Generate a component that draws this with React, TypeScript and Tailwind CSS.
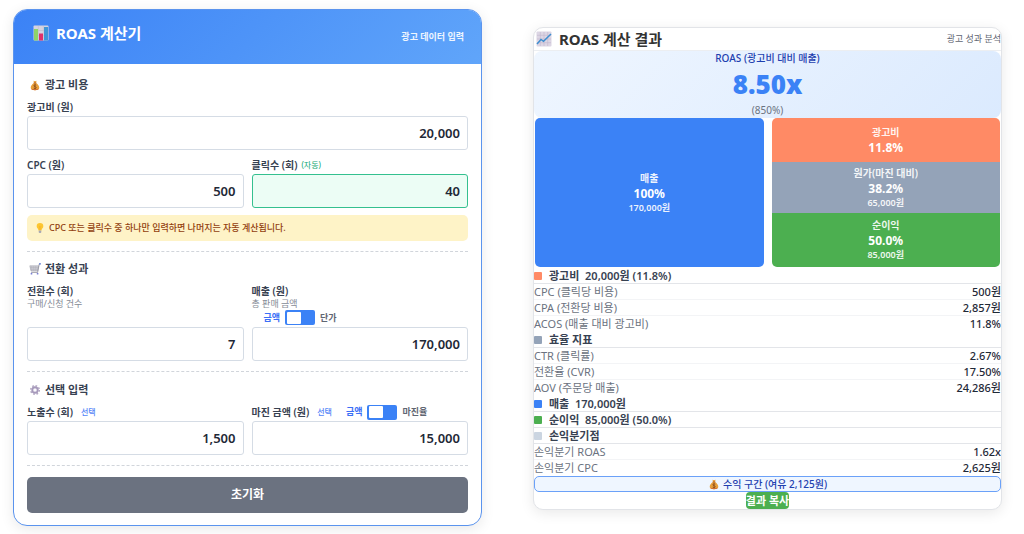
import type { ReactNode } from "react";

const FONT = "font-['Noto_Sans','Noto_Sans_CJK_KR',sans-serif]";

function BarChartIcon() {
  return (
    <svg viewBox="0 0 16 16" className="size-4 shrink-0" aria-hidden="true">
      <rect x="0.5" y="0.5" width="15" height="15" rx="1" fill="#d5d3e0" />
      <path d="M5.3 1v14M10.3 1v14M1 5.5h14M1 10.500h14" stroke="#c0bccf" strokeWidth="0.6" />
      <rect x="1" y="4" width="4" height="11.500" fill="#8fd46a" />
      <rect x="6" y="8.500" width="4" height="7" fill="#e0306c" />
      <rect x="11" y="2" width="4" height="13.500" fill="#3f96d8" />
    </svg>
  );
}

function TrendIcon() {
  return (
    <svg viewBox="0 0 16 16" className="size-4 shrink-0" aria-hidden="true">
      <rect x="0.5" y="0.5" width="15" height="15" rx="1" fill="#dcd6e4" />
      <path d="M4.300 1v14M8 1v14M11.700 1v14M1 4.300h14M1 8h14M1 11.700h14" stroke="#c3b7cf" strokeWidth="0.6" />
      <path d="M1 13l4-4.500 2.500 1.800L15 3" fill="none" stroke="#3f8fd0" strokeWidth="1.500" />
    </svg>
  );
}

function MoneyBagIcon() {
  return (
    <svg viewBox="-1 -1.500 14 14" className="size-3 shrink-0" aria-hidden="true">
      <path d="M4.300.6 6 1.200 7.800.6 7.200 3.200C9.600 4.500 11 6.800 11 8.800 11 10.800 9.500 11.500 6 11.500S1 10.800 1 8.800c0-2 1.400-4.300 3.800-5.600z" fill="#e8a03c" />
      <path d="M1.400 10c1 1.200 2.400 1.500 4.600 1.500s3.600-.3 4.600-1.500c-2 .7-7 .7-9.200 0z" fill="#c9622d" />
      <path d="M4.400 3.200h3.200" stroke="#a7521f" strokeWidth="0.9" />
      <path d="M7.400 5.800C6.500 5 4.700 5.200 4.700 6.400c0 1.300 2.800.8 2.800 2.200 0 1.200-2 1.400-3 .5M6 4.700v5.600" fill="none" stroke="#7a3c17" strokeWidth="0.8" />
    </svg>
  );
}

function CartIcon() {
  return (
    <svg viewBox="0 0 12 12" className="size-3 shrink-0" aria-hidden="true">
      <path d="M.8 2.800h8.700L8.700 8H2z" fill="#d3d3da" stroke="#a2a2ac" strokeWidth="0.6" />
      <path d="M2.800 3v5M4.800 3v5M6.800 3v5M1 4.600h8M1.400 6.300h7.400" stroke="#aaaab4" strokeWidth="0.5" />
      <path d="M11.600.8H10.300L8.600 9.400H2.200" fill="none" stroke="#8c8c98" strokeWidth="0.8" />
      <path d="M10.200.8h1.500" stroke="#4f6fe0" strokeWidth="1.200" />
      <circle cx="2.500" cy="10.700" r="0.9" fill="#7a80d6" />
      <circle cx="8.600" cy="10.700" r="0.9" fill="#7a80d6" />
    </svg>
  );
}

function GearIcon() {
  return (
    <svg viewBox="-0.500 -0.500 13 13" className="size-3 shrink-0" aria-hidden="true">
      <circle cx="6" cy="6" r="4.700" fill="none" stroke="#b3a8c3" strokeWidth="1.600" strokeDasharray="1.850 1.840" />
      <circle cx="6" cy="6" r="3" fill="#f1eef6" stroke="#a699ba" strokeWidth="2" />
      <circle cx="6" cy="6" r="1.100" fill="#fff" />
    </svg>
  );
}

function BulbIcon() {
  return (
    <svg viewBox="-0.500 -0.500 13 13" className="size-3 shrink-0" aria-hidden="true">
      <path d="M6 .5a3.600 3.600 0 0 1 3.600 3.600C9.600 6 7.800 6.800 7.600 8.600H4.400C4.200 6.800 2.400 6 2.400 4.100A3.600 3.600 0 0 1 6 .5z" fill="#fcc630" />
      <path d="M5 4.200 6 5.200l1-1M6 5v3.500" fill="none" stroke="#f5a52a" strokeWidth="0.7" />
      <path d="M4.600 8.800h2.800v1.700l-.7.900H5.300l-.7-.9z" fill="#a9a9b2" />
    </svg>
  );
}

function SectionTitle({ icon, children }: { icon: ReactNode; children: ReactNode }) {
  return (
    <h2 className="mb-1 flex h-5 items-center gap-1 pl-0.5 text-[11px] font-bold text-[#374151]">
      {icon}
      {children}
    </h2>
  );
}

function Field({
  id,
  label,
  value,
  tag,
  hint,
  toggle,
  auto = false,
}: {
  id: string;
  label: string;
  value: string;
  tag?: ReactNode;
  hint?: string;
  toggle?: ReactNode;
  auto?: boolean;
}) {
  return (
    <div className="flex min-w-0 flex-col justify-between gap-px">
      <div>
        <div className="flex h-4 items-center gap-1 text-[10px] font-semibold whitespace-nowrap text-[#374151]">
          <label htmlFor={id}>{label}</label>
          {tag}
        </div>
        {hint && <p className="h-2.5 text-[9px] leading-[10px] text-[#868c97]">{hint}</p>}
        {toggle}
      </div>
      <input
        id={id}
        type="text"
        inputMode="numeric"
        defaultValue={value}
        className={`h-[34px] w-full rounded-[3px] border px-[7px] text-right text-[13px] font-semibold text-[#1f2937] outline-none ${
          auto ? "border-[#34c08f] bg-[#ecfdf5]" : "border-[#d5dce5] bg-white"
        }`}
      />
    </div>
  );
}

function Toggle({ left, right, name }: { left: string; right: string; name: string }) {
  return (
    <label className="flex h-[17px] items-center gap-[5px] text-[9px] font-semibold whitespace-nowrap">
      <span className="text-[#3b6ff6]">{left}</span>
      <input
        type="checkbox"
        role="switch"
        aria-label={name}
        className="flex h-[15px] w-[30px] appearance-none items-center rounded-[2px] bg-[#3b82f6] px-0.5 before:h-3 before:w-3.5 before:rounded-[1px] before:bg-white checked:justify-end"
      />
      <span className="text-[#5f6672]">{right}</span>
    </label>
  );
}

function Optional() {
  return <span className="pl-1 text-[8px] font-medium text-[#5585f7]">선택</span>;
}

function Divider() {
  return <hr className="mt-2.5 border-t border-dashed border-[#d1d5db]" />;
}

function InputCard() {
  return (
    <form className="mt-[9px] overflow-hidden rounded-[14px] border border-[#5b94ee] bg-white shadow-[0_3px_14px_rgba(0,0,0,0.09)]">
      <header className="flex h-[54px] items-center justify-between bg-linear-[135deg] from-[#3b82f6] to-[#60a5fa] pr-[17px] pl-[19px]">
        <h1 className="flex items-center gap-[7px] pb-2 text-[15px] font-bold text-white">
          <BarChartIcon />
          ROAS 계산기
        </h1>
        <span className="text-[9px] font-semibold text-white/90">광고 데이터 입력</span>
      </header>

      <div className="px-[13px] pb-3">
        <section className="pt-[11px]">
          <SectionTitle icon={<MoneyBagIcon />}>광고 비용</SectionTitle>
          <Field id="cost" label="광고비 (원)" value="20,000" />
          <div className="mt-[7px] grid grid-cols-2 gap-2">
            <Field id="cpc" label="CPC (원)" value="500" />
            <Field
              id="clicks"
              label="클릭수 (회)"
              value="40"
              auto
              tag={<span className="text-[8px] font-normal text-[#10a874]">(자동)</span>}
            />
          </div>
          <p className="mt-[7px] flex h-[26px] items-center gap-[3px] rounded-[5px] bg-[#fef3c7] px-[7px] text-[9px] font-medium text-[#92400e]">
            <BulbIcon />
            CPC 또는 클릭수 중 하나만 입력하면 나머지는 자동 계산됩니다.
          </p>
          <Divider />
        </section>

        <section className="pt-[7px]">
          <SectionTitle icon={<CartIcon />}>전환 성과</SectionTitle>
          <div className="grid grid-cols-2 gap-2">
            <Field id="conversions" label="전환수 (회)" value="7" hint="구매/신청 건수" />
            <Field
              id="revenue"
              label="매출 (원)"
              value="170,000"
              hint="총 판매 금액"
              toggle={
                <div className="pl-3">
                  <Toggle left="금액" right="단가" name="매출 입력 방식" />
                </div>
              }
            />
          </div>
          <Divider />
        </section>

        <section className="pt-2">
          <SectionTitle icon={<GearIcon />}>선택 입력</SectionTitle>
          <div className="grid grid-cols-2 gap-2">
            <Field id="impressions" label="노출수 (회)" value="1,500" tag={<Optional />} />
            <Field
              id="margin"
              label="마진 금액 (원)"
              value="15,000"
              tag={
                <>
                  <Optional />
                  <div className="pl-2.5">
                    <Toggle left="금액" right="마진율" name="마진 입력 방식" />
                  </div>
                </>
              }
            />
          </div>
          <Divider />
        </section>

        <button
          type="reset"
          className="mt-[11px] h-9 w-full rounded-[5px] bg-[#6b7280] text-[12px] font-bold text-white"
        >
          초기화
        </button>
      </div>
    </form>
  );
}

function GroupTitle({ color, children }: { color: string; children: ReactNode }) {
  return (
    <h3 className="flex h-4 items-center gap-[7px] border-b border-[#e3e5e9] text-[11px] leading-[15px] font-semibold text-[#374151]">
      <span className={`size-2 rounded-[1px] ${color}`} />
      <span className="whitespace-pre">{children}</span>
    </h3>
  );
}

function Metrics({ rows }: { rows: [string, string][] }) {
  return (
    <dl>
      {rows.map(([name, value]) => (
        <div
          key={name}
          className="flex h-4 items-center justify-between border-b border-[#f3f4f6] text-[11px] leading-[15px] last:border-transparent"
        >
          <dt className="text-[#6b7280]">{name}</dt>
          <dd className="font-medium text-[#1f2937]">{value}</dd>
        </div>
      ))}
    </dl>
  );
}

function Share({
  name,
  percent,
  amount,
  className,
}: {
  name: string;
  percent: string;
  amount?: string;
  className: string;
}) {
  return (
    <div className={`flex flex-col items-center justify-center text-white ${className}`}>
      <span className="text-[10px] leading-[15px] font-semibold opacity-90">{name}</span>
      <span className="text-[12px] leading-[15px] font-bold">{percent}</span>
      {amount && <span className="text-[9px] leading-[14px] font-semibold opacity-90">{amount}</span>}
    </div>
  );
}

function ResultCard() {
  return (
    <section className="mt-[27px] overflow-hidden rounded-[10px] border border-[#e2e4e8] bg-white shadow-[0_3px_14px_rgba(0,0,0,0.09)]">
      <header className="flex h-[23px] items-center justify-between border-b border-[#eceef1] pl-0.5">
        <h2 className="flex items-center gap-[7px] text-[15px] font-bold text-[#333]">
          <TrendIcon />
          ROAS 계산 결과
        </h2>
        <span className="text-[9px] text-[#5f6672]">광고 성과 분석</span>
      </header>

      <div className="flex flex-col items-center rounded-[8px] bg-linear-[135deg] from-[#eff6ff] to-[#dbeafe]">
        <span className="text-[10px] leading-[15px] font-medium text-[#1e40af]">ROAS (광고비 대비 매출)</span>
        <strong className="text-[26px] leading-[37px] font-black text-[#3b82f6]">8.50x</strong>
        <span className="text-[10px] leading-[15px] text-[#6b7280]">(850%)</span>
      </div>

      <div className="grid grid-cols-2 gap-2 px-px pb-px">
        <Share name="매출" percent="100%" amount="170,000원" className="rounded-[5px] bg-[#3b82f6]" />
        <div className="flex flex-col overflow-hidden rounded-[5px]">
          <Share name="광고비" percent="11.8%" className="h-11 bg-[#ff8a65]" />
          <Share name="원가(마진 대비)" percent="38.2%" amount="65,000원" className="h-[51px] bg-[#94a3b8]" />
          <Share name="순이익" percent="50.0%" amount="85,000원" className="h-[54px] bg-[#4caf50]" />
        </div>
      </div>

      <GroupTitle color="bg-[#ff8a65]">{"광고비  20,000원 (11.8%)"}</GroupTitle>
      <Metrics
        rows={[
          ["CPC (클릭당 비용)", "500원"],
          ["CPA (전환당 비용)", "2,857원"],
          ["ACOS (매출 대비 광고비)", "11.8%"],
        ]}
      />
      <GroupTitle color="bg-[#94a3b8]">효율 지표</GroupTitle>
      <Metrics
        rows={[
          ["CTR (클릭률)", "2.67%"],
          ["전환율 (CVR)", "17.50%"],
          ["AOV (주문당 매출)", "24,286원"],
        ]}
      />
      <GroupTitle color="bg-[#3b82f6]">{"매출  170,000원"}</GroupTitle>
      <GroupTitle color="bg-[#4caf50]">{"순이익  85,000원 (50.0%)"}</GroupTitle>
      <GroupTitle color="bg-[#cbd5e1]">손익분기점</GroupTitle>
      <Metrics
        rows={[
          ["손익분기 ROAS", "1.62x"],
          ["손익분기 CPC", "2,625원"],
        ]}
      />

      <p className="flex h-4 items-center justify-center gap-[3px] rounded-[5px] border border-[#6ba1f8] bg-[#eff6ff] text-[10px] leading-[14px] font-medium text-[#1e40af]">
        <MoneyBagIcon />
        수익 구간 (여유 2,125원)
      </p>
      <button
        type="button"
        className="mx-auto block h-[17px] rounded-[4px] bg-[#4caf50] text-[11px] leading-[17px] font-bold whitespace-nowrap text-white"
      >
        결과 복사
      </button>
    </section>
  );
}

export default function App() {
  return (
    <main className={`grid min-h-screen grid-cols-2 items-start gap-[51px] bg-white pr-[22px] pl-[13px] ${FONT}`}>
      <InputCard />
      <ResultCard />
    </main>
  );
}
